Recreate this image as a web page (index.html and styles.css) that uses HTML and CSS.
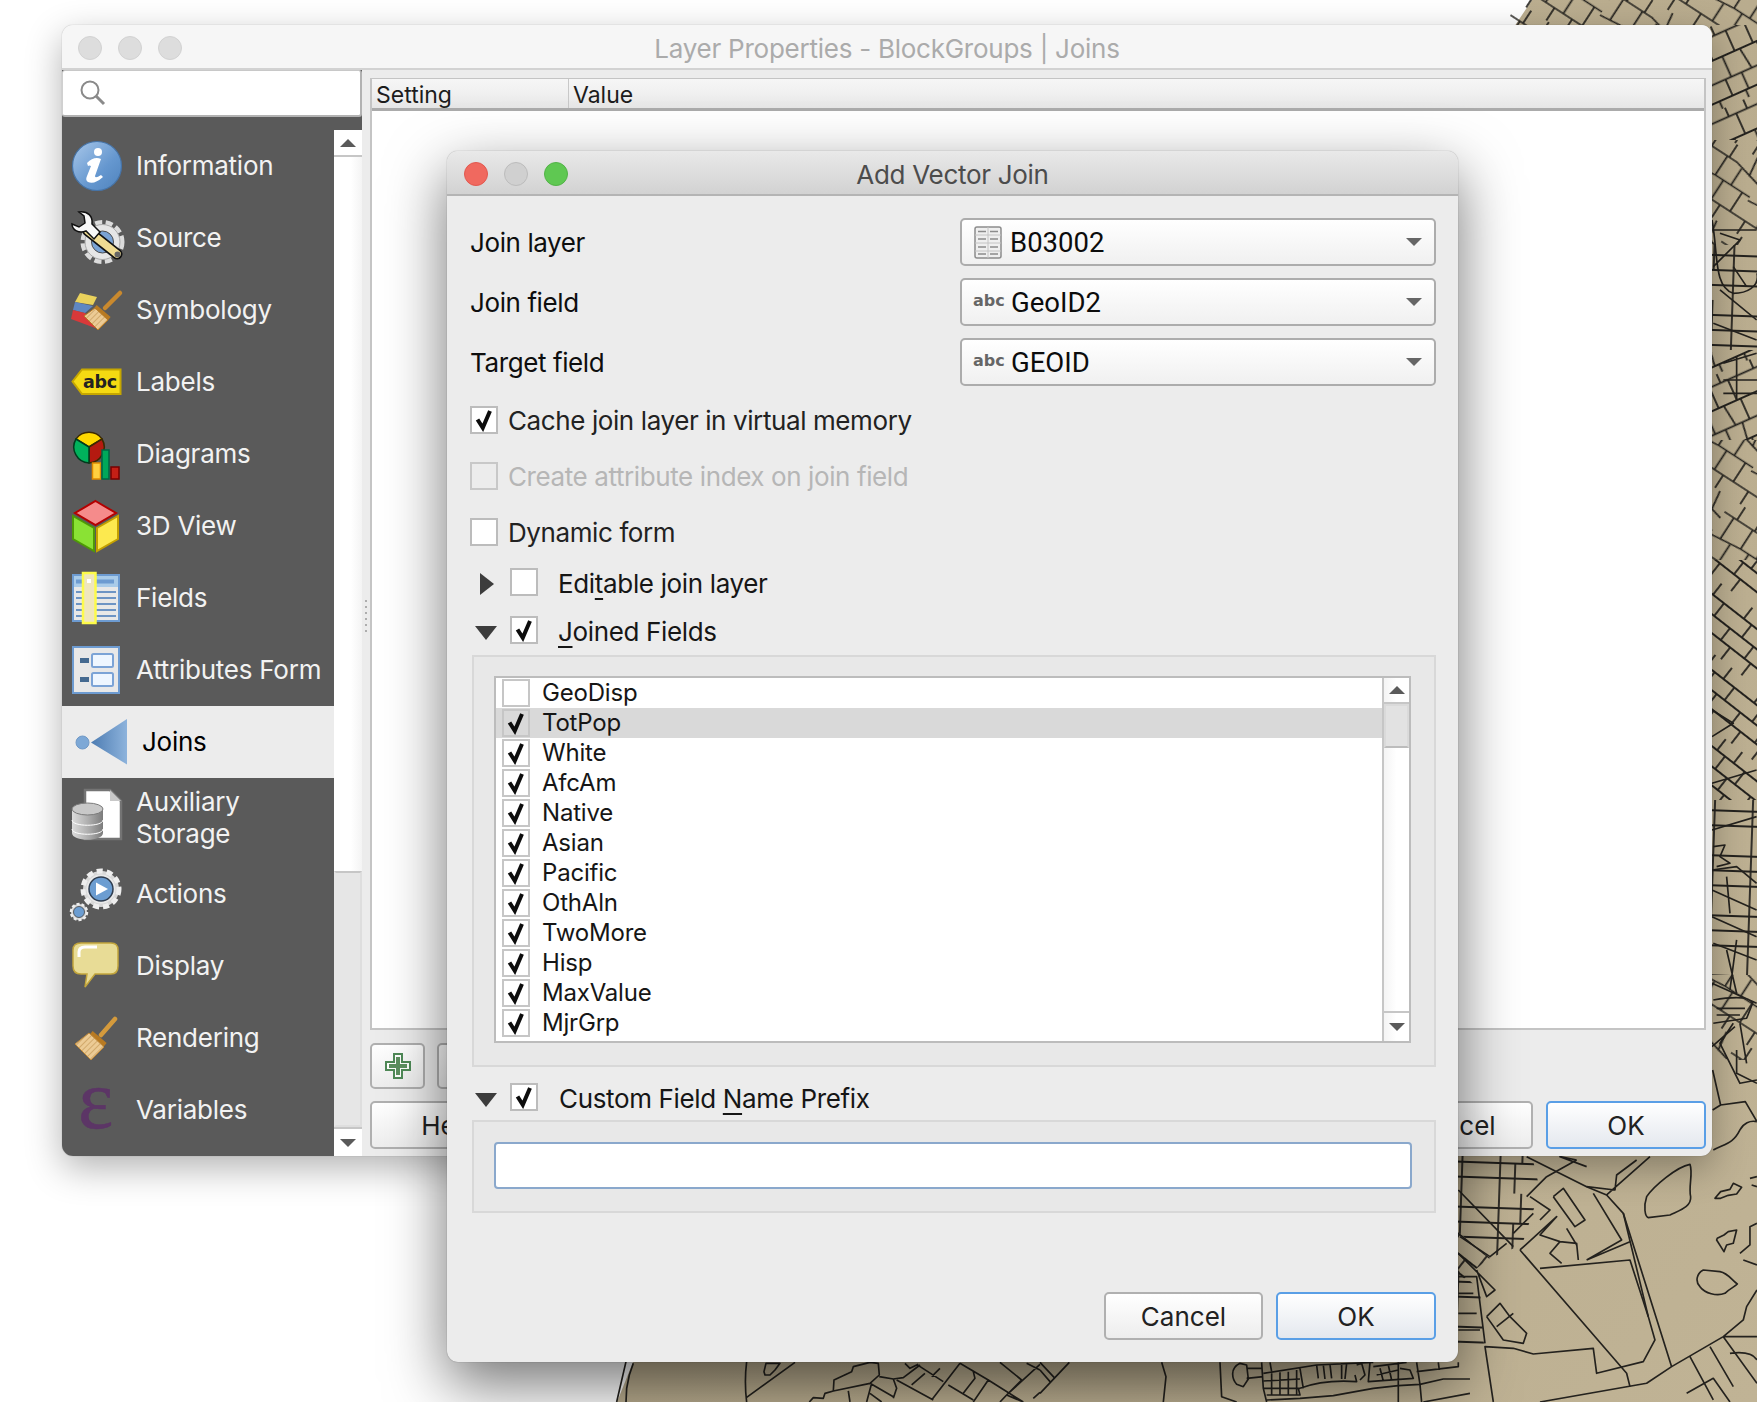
FILE: index.html
```html
<!DOCTYPE html>
<html lang="en">
<head>
<meta charset="utf-8">
<title>Add Vector Join</title>
<link rel="stylesheet" href="styles.css">
</head>
<body>
<svg class="sprite" width="0" height="0">
  <defs>
    <symbol id="chk" viewBox="2 2 24 24"><path d="M7.5 13.500 L12.800 21.800 L20 5" fill="none" stroke="#0c0c0c" stroke-width="4"/></symbol>
    <linearGradient id="gi" x1="0" y1="0" x2="1" y2="1"><stop offset="0" stop-color="#a9c8ea"/><stop offset=".6" stop-color="#6597cf"/><stop offset="1" stop-color="#4f83bd"/></linearGradient>
    <linearGradient id="gj" x1="0" y1="0" x2="1" y2="0"><stop offset="0" stop-color="#4d7cb2"/><stop offset="1" stop-color="#8db3dc"/></linearGradient>
    <linearGradient id="gd" x1="0" y1="0" x2="1" y2="0"><stop offset="0" stop-color="#dcdcdc"/><stop offset=".5" stop-color="#b0b0b0"/><stop offset="1" stop-color="#7c7c7c"/></linearGradient>
    <pattern id="brist" width="4" height="4" patternUnits="userSpaceOnUse" patternTransform="rotate(45)"><rect width="4" height="4" fill="#eccb95"/><path d="M0 0V4" stroke="#b98a46" stroke-width="1"/></pattern>
  </defs>
</svg>

<svg class="map" viewBox="0 0 1757 1402" width="1757" height="1402">
  <defs>
    <linearGradient id="mapfill" x1="0" y1="0" x2="1" y2="1"><stop offset="0" stop-color="#c2b596"/><stop offset=".5" stop-color="#b9ac8e"/><stop offset="1" stop-color="#c0b395"/></linearGradient>
    <pattern id="blkA" width="100" height="100" patternUnits="userSpaceOnUse" patternTransform="rotate(-24) scale(.8)">
      <path d="M0 12H100M0 40H100M0 68H100M0 90H100M15 0V12M40 0V12M70 0V12M25 12V40M55 12V40M80 12V40M10 40V68M38 40V68M62 40L66 68M85 40V68M30 68V90M52 68V90M75 68L72 90M12 90V100M48 90V100M78 90V100" fill="none" stroke="#24221e" stroke-width="2.2"/>
    </pattern>
    <pattern id="blkB" width="100" height="100" patternUnits="userSpaceOnUse" patternTransform="rotate(33) scale(.75)">
      <path d="M0 20H60L100 30M0 55L45 50H100M0 80H100M20 0V20M48 0V20M80 0L84 27M15 20V53M45 20V50M70 24V50M30 53V80M58 50V80M88 50V80M12 80V100M44 80V100M72 80V100" fill="none" stroke="#24221e" stroke-width="2.3"/>
    </pattern>
    <pattern id="blkC" width="80" height="60" patternUnits="userSpaceOnUse" patternTransform="rotate(2)">
      <path d="M0 15H80M0 30H80M0 45H80M20 0V60M42 0V30M62 0V60M35 30V60" fill="none" stroke="#24221e" stroke-width="1.8"/>
    </pattern>
    <pattern id="blkD" width="60" height="60" patternUnits="userSpaceOnUse" patternTransform="rotate(38)">
      <path d="M0 14H60M0 30H60M0 45H60M15 0V14M36 0V14M50 14V30M25 14V30M10 30V45M40 30V45M22 45V60M48 45V60" fill="none" stroke="#24221e" stroke-width="1.8"/>
    </pattern>
  </defs>
  <path class="land" d="M1532 0L1512 30L1450 1100L633 1362L617 1402H1757V0Z"/>
  <path class="fillB" d="M1510 0H1757V25H1510Z"/>
  <path class="fillA" d="M1710 25H1757V140H1710Z"/>
  <path class="fillB" d="M1710 140H1757V245H1710Z"/>
  <path class="fillC" d="M1710 245H1757V350H1710Z"/>
  <path class="fillA" d="M1710 350H1757V440H1710Z"/>
  <path class="fillB" d="M1710 440H1757V560H1710Z"/>
  <path class="fillD" d="M1710 560H1757V650H1710Z"/>
  <path class="fillD" d="M1710 650H1757V800H1710Z"/>
  <path class="fillC" d="M1710 800H1757V880H1710Z"/>
  <path class="fillC" d="M1710 880H1757V975H1710Z"/>
  <path class="fillB" d="M1710 975H1757V1060H1710Z"/>
  <path class="fillC" d="M1458 1156H1532L1540 1190L1522 1245L1490 1258L1458 1232Z"/>
  <path class="fillD" d="M1458 1232L1490 1258L1462 1280L1458 1280Z"/>
  <path class="fillC" d="M1458 1270L1480 1290L1484 1345H1458Z"/>
  <g class="lines">
    <g transform="translate(1300 1050) scale(.3333)">
      <path d="M1170 343C1130 350 1060 410 1040 440C1030 470 1035 500 1045 503L1110 495C1140 480 1175 470 1172 440C1165 410 1180 370 1170 343Z"/>
      <path d="M1210 660C1190 670 1185 695 1200 710C1215 730 1250 740 1275 730C1290 715 1305 710 1312 702C1295 690 1285 670 1260 665Z"/>
      <path d="M1245 445L1262 425L1290 418L1300 400L1325 412L1310 432L1285 436L1262 445Z"/>
      <path d="M1252 565L1272 555L1285 545L1310 540L1300 580L1280 585L1272 605L1250 570Z"/>
      <path d="M1320 610L1350 585L1350 530L1371 520M1330 630L1371 645M1350 385L1371 380M1355 405L1371 410"/>
      <path d="M1240 300C1280 280 1300 280 1320 240C1330 220 1350 210 1371 215M1238 60L1262 165L1336 155L1371 215M1262 165L1238 180M1310 0V70L1371 100"/>
      <path d="M680 320L860 410L920 435L970 490L1045 800L1065 870L1030 935L890 970L880 895L700 912L640 895L555 890L580 1056"/>
      <path d="M970 490L1115 950M920 435L1050 320M860 410L945 420L950 375L1010 330M830 330L780 320L860 350M740 380L680 440M740 380L830 330"/>
      <path d="M660 600L980 970L990 1010M720 655L990 630L1045 800M860 630L990 575M860 630L965 570L880 430M660 600L770 500L720 555L780 575L830 580L835 630M780 575L750 610L785 640M800 535L830 585"/>
      <path d="M760 440L790 415L855 510L825 530L760 440M690 440L750 480L720 510M640 590L475 420M700 490L640 550M620 580L570 620L480 560"/>
      <path d="M1115 950L1040 1000L720 1056M1115 950L1270 860H1371M1270 860L1371 1000M1170 920L1240 1050M1230 890L1300 1010M1290 910C1330 905 1360 910 1371 930M1160 1030L1240 985L1290 1056M1371 720L1340 770L1330 810L1270 860"/>
      <path d="M475 610L585 720L560 740L530 660M560 800L600 760L630 800L680 850L670 880L610 870L560 800M590 830L640 790M475 680H530L555 880M475 730H520M475 790H530M475 840H540"/>
    </g>
    <g transform="translate(1260 650) scale(.3333)">
      <path d="M1356 180L1420 220L1356 260M1356 400L1490 360M1356 540L1490 500M1356 660L1430 650L1490 700M1400 680L1410 790M1356 720L1490 780M1356 800L1490 860M1356 1000L1490 1060M1420 1120L1380 1180L1440 1300L1491 1290M1356 1190L1425 1130M1360 1050C1420 1040 1470 1040 1478 1060L1460 1105L1360 1120M1370 1075H1455M1370 1095H1440M1440 1120L1460 1240"/>
      <path d="M1360 590L1395 585L1380 620L1410 640L1370 650M1400 900L1430 1030M1360 880L1490 930M1430 870L1410 1020"/>
    </g>
    <g transform="translate(1480 0) scale(.3333)">
      <path d="M696 660C715 760 700 860 760 880C800 880 840 860 831 820M700 690L830 690M720 700L780 720L700 800M760 800L800 860M720 870L830 960M700 970L830 1020M730 1090L830 1060M770 1070V1200M730 1140H831M730 1180H831"/>
    </g>
    <g transform="translate(610 1355) scale(.3333)">
      <path d="M48 20L20 141M70 25L58 60L50 100L48 141M410 20C405 60 405 100 410 141M410 127L555 22M465 60L462 50L468 25L510 25L495 45L480 60Z"/>
      <path d="M780 22L805 25L808 60L780 85L670 108L672 75L725 50L730 35L780 22M808 65L850 72L880 68L930 30M850 72L860 100L850 130M780 85L850 125M785 85L770 141M715 108L720 141M670 108L645 115L640 130L610 128L598 141M780 115L815 141"/>
      <path d="M860 75L970 135M885 25L900 40L925 28M920 28L1000 80M945 55L905 90M990 40L965 65M1050 25L965 135M1050 25L1135 75L1090 141M1090 50L1095 70L1075 95L1060 115M1015 90L1090 135M1135 75L1240 141M1170 22L1235 75L1190 120L1170 141M1250 25L1290 45M1290 28L1190 120M1190 120L1240 141M1270 130L1290 112"/>
    </g>
    <g transform="translate(1040 1355) scale(.3333)">
      <path d="M0 22L45 70M88 22L0 115M0 45L30 80M365 22L378 65L370 141M540 22L545 125L590 141M600 25C570 40 575 70 590 88L610 95L625 72L620 30ZM620 40H665M620 70L670 65M665 22L670 100L680 141M690 22L695 50"/>
      <path d="M670 55L830 30L1000 22M670 78L780 72M670 100H780M680 120H780L775 100M695 55V120M720 52V120M745 50V120M770 45V120M680 135L780 130L880 122L1000 100L1075 92L1140 88L1210 72L1290 72M780 40L790 100M780 100C820 85 880 75 950 80L945 60M830 30L835 70M850 30L855 72M870 28L875 70M905 24V72M920 25L915 72"/>
      <path d="M950 30L965 25L975 60L960 75M990 22L985 80L1120 70L1110 45L1080 40M1000 35L1100 22M1010 60L1075 45M1020 40L1030 78M1045 30L1055 75M1075 22V141M1130 22L1140 88L1145 141M1130 50L1255 35V22M1195 22L1198 45M1150 141L1290 115"/>
    </g>
  </g>
</svg>

<section class="win main">
  <header class="tbar tbar-main">
    <div class="lights"><i class="lt off"></i><i class="lt off"></i><i class="lt off"></i></div>
    <div class="tt tt-main">Layer Properties - BlockGroups | Joins</div>
  </header>
  <div class="main-body">
    <aside class="side">
      <div class="search">
        <svg width="30" height="30" viewBox="0 0 30 30"><circle cx="12" cy="12" r="8.5" fill="none" stroke="#8a8a8a" stroke-width="2"/><path d="M18 18L26 26" stroke="#8a8a8a" stroke-width="3"/></svg>
      </div>
      <div class="side-main">
        <nav class="nav">
          <a class="it"><svg class="ic" viewBox="0 0 54 54"><circle cx="27" cy="27" r="24.5" fill="url(#gi)" stroke="#4674a8" stroke-width="1.2"/><circle cx="28" cy="13" r="4" fill="#fff"/><path d="M17 24Q24 17 31 20L25 37Q25 40 31 36L33 38Q24 46 18 43Q15 41 17 37L21 27Q19 26 18 27Z" fill="#fff"/></svg><span>Information</span></a>
          <a class="it"><svg class="ic" viewBox="0 0 54 54"><circle cx="32.500" cy="31" r="19.500" fill="none" stroke="#dcdcdc" stroke-width="5" stroke-dasharray="7 3.500"/><circle cx="32.500" cy="31" r="17.500" fill="#e6e6e6" stroke="#aaa"/><circle cx="32.500" cy="31" r="11" fill="#7aa3d4" stroke="#4c4c4c"/><path d="M18 20L47 43" stroke="#111" stroke-width="11" stroke-linecap="round"/><path d="M18 20L47 43" stroke="#f0dc92" stroke-width="7.500" stroke-linecap="round"/><circle cx="47.500" cy="43.500" r="3" fill="#666"/><path d="M2 13L9 16L15 12L14 5L9 1C18 0 23 5 22 13L30 21L24 28L16 20C9 23 2 19 2 13Z" fill="#f8f8f8" stroke="#111" stroke-width="1.500"/></svg><span>Source</span></a>
          <a class="it"><svg class="ic" viewBox="0 0 54 54"><path d="M10 10L27 14L23 22L5 19Z" fill="#ead25c"/><path d="M5 19L23 23L15 30L3 27Z" fill="#5f87c2"/><path d="M3 27L15 30L28 46L1 36Z" fill="#d8393a"/><path d="M50 10L35 25" stroke="#c9892e" stroke-width="4.500" stroke-linecap="round"/><path d="M25 24L39 36" stroke="#b87a22" stroke-width="5"/><path d="M25 25L38 37L28 47L14 33Z" fill="url(#brist)" stroke="#b87a22"/></svg><span>Symbology</span></a>
          <a class="it"><svg class="ic" viewBox="0 0 54 54"><path d="M2.500 26.500L12 14.500H50.500V39H12Z" fill="#f5da12" stroke="#c6a700" stroke-width="2"/><text class="abc-ic" x="13" y="33">abc</text></svg><span>Labels</span></a>
          <a class="it"><svg class="ic" viewBox="0 0 54 54"><path d="M19 20L6 12A16 16 0 0 1 32 12Z" fill="#ffd900" stroke="#3c2a00" stroke-width="1.500"/><path d="M19 20L32 12A16 16 0 0 1 19 36Z" fill="#b41a10" stroke="#3c2a00" stroke-width="1.500"/><path d="M19 20L19 36A16 16 0 0 1 6 12Z" fill="#00b25c" stroke="#003c1e" stroke-width="1.500"/><rect x="22.500" y="36" width="8" height="16" fill="#ffd040" stroke="#e08a00" stroke-width="1.500"/><rect x="32" y="23" width="7" height="29" fill="#00a85a" stroke="#064" stroke-width="1.500"/><rect x="41" y="40" width="8" height="12" fill="#c51f16" stroke="#700" stroke-width="1.500"/></svg><span>Diagrams</span></a>
          <a class="it"><svg class="ic" viewBox="0 0 54 54"><path d="M25.500 2L46 14L25.500 26L5 14Z" fill="#f58b8b" stroke="#b40000" stroke-width="2"/><path d="M3 17L24 29V52L3 40Z" fill="#8ae234" stroke="#4e9a06" stroke-width="2"/><path d="M27 29L48 17V40L27 52Z" fill="#fce94f" stroke="#c4a000" stroke-width="2"/></svg><span>3D View</span></a>
          <a class="it"><svg class="ic" viewBox="0 0 54 54"><rect x="3" y="4" width="46" height="46" fill="#e8e8e8" stroke="#6d9bd1" stroke-width="2"/><rect x="4" y="5" width="44" height="11" fill="#a9cbe9"/><path d="M6 10.500H44" stroke="#6d9bd1" stroke-width="4"/><path d="M6 21H46M6 27H46M6 33H46M6 39H46M6 45H46" stroke="#6d94c4" stroke-width="2"/><rect x="13" y="2" width="12.500" height="50" fill="#efe6bd" stroke="#fdfb4a" stroke-width="2.500"/><rect x="17" y="8" width="4" height="4" fill="#fff"/></svg><span>Fields</span></a>
          <a class="it"><svg class="ic" viewBox="0 0 54 54"><rect x="3" y="4" width="46" height="46" fill="#e8e8e8" stroke="#6d9bd1" stroke-width="2"/><rect x="22" y="11" width="21" height="13" rx="1.500" fill="#eef6ff" stroke="#7ba3d6" stroke-width="2"/><rect x="22" y="30" width="21" height="13" rx="1.500" fill="#eef6ff" stroke="#7ba3d6" stroke-width="2"/><rect x="10" y="15" width="9" height="5" fill="#456a90"/><rect x="10" y="34" width="9" height="5" fill="#456a90"/></svg><span>Attributes Form</span></a>
          <a class="it on"><svg class="ic ic-w" viewBox="0 0 60 54"><circle cx="12.500" cy="27.500" r="6.500" fill="#7da8d6" stroke="#6f98c6"/><path d="M21 27.500L57 4V49.500Z" fill="url(#gj)"/></svg><span>Joins</span></a>
          <a class="it it-aux"><svg class="ic" viewBox="0 0 54 54"><path d="M15 3H40L51 14V52H15Z" fill="#fff" stroke="#747474" stroke-width="2.500"/><path d="M40 3V14H51Z" fill="#c8c8c8"/><path d="M2 22V46C2 55 33 55 33 46V22Z" fill="url(#gd)"/><ellipse cx="17.500" cy="22" rx="15.500" ry="6" fill="#c8c8c8" stroke="#7a7a7a"/><path d="M2 33C2 40 33 40 33 33M2 42C2 49 33 49 33 42" fill="none" stroke="#fff" stroke-width="1"/></svg><span>Auxiliary<br>Storage</span></a>
          <a class="it"><svg class="ic" viewBox="0 0 54 54"><circle cx="31" cy="22" r="18" fill="#d8d8d8" stroke="#eee" stroke-width="5" stroke-dasharray="6 4"/><circle cx="31" cy="22" r="14.500" fill="#e9e9e9"/><circle cx="31" cy="22" r="12" fill="#6c9dd1" stroke="#2f3d4f" stroke-width="1.500"/><path d="M26 15.500L38 22L26 28.500Z" fill="#fff"/><circle cx="9" cy="45" r="8" fill="#d8d8d8" stroke="#eee" stroke-width="2.500" stroke-dasharray="3 2"/><circle cx="9" cy="45" r="5.500" fill="#6c9dd1" stroke="#444" stroke-width=".8"/></svg><span>Actions</span></a>
          <a class="it"><svg class="ic" viewBox="0 0 54 54"><path d="M11 4H41Q48 4 48 11V27Q48 35 41 35H25L15 48L17 35H11Q3 35 3 27V11Q3 4 11 4Z" fill="#e8dc96" stroke="#c2a53c" stroke-width="1.500"/><path d="M9 18V13Q9 8 15 8H27" fill="none" stroke="#fff" stroke-width="3"/></svg><span>Display</span></a>
          <a class="it"><svg class="ic" viewBox="0 0 54 54"><path d="M45 8L31 24" stroke="#d49a3c" stroke-width="4.500" stroke-linecap="round"/><path d="M21 22L35 34" stroke="#b87a22" stroke-width="5"/><path d="M19 22L34 36L21 49L5 33Z" fill="url(#brist)" stroke="#c08a3c"/></svg><span>Rendering</span></a>
          <a class="it"><svg class="ic" viewBox="0 0 54 54"><text class="eps" x="8" y="45">ε</text></svg><span>Variables</span></a>
        </nav>
        <div class="sb sb-side">
          <div class="sb-btn"><i class="arr up"></i></div>
          <div class="sb-thumb"></div>
          <div class="sb-track"></div>
          <div class="sb-btn dn"><i class="arr down"></i></div>
        </div>
      </div>
    </aside>
    <div class="split"><i></i></div>
    <div class="pane">
      <div class="table">
        <div class="thead"><div class="th th1">Setting</div><div class="th">Value</div></div>
        <div class="tbody"></div>
      </div>
      <div class="tools">
        <button class="btn tool"><svg width="28" height="28" viewBox="0 0 28 28"><path d="M9 1H19V9H27V19H19V27H9V19H1V9H9Z" fill="#4f8a57"/><path d="M11 3H17V11H25V17H17V25H11V17H3V11H11Z" fill="#fff"/><path d="M12 5H16V12H23V16H16V23H12V16H5V12H12Z" fill="#5d9060"/></svg></button>
        <button class="btn tool"></button>
      </div>
      <div class="foot">
        <button class="btn help">Help</button>
        <span class="grow"></span>
        <button class="btn cancel">Cancel</button>
        <button class="btn ok wide">OK</button>
      </div>
    </div>
  </div>
</section>

<section class="win dlg">
  <header class="tbar tbar-dlg">
    <div class="lights"><i class="lt red"></i><i class="lt gray"></i><i class="lt green"></i></div>
    <div class="tt">Add Vector Join</div>
  </header>
  <div class="dlg-body">
    <div class="form">
      <label class="lab">Join layer</label>
      <div class="combo"><svg class="tbl" width="28" height="33" viewBox="0 0 28 33"><rect x="1" y="1" width="26" height="31" rx="2" fill="#efefef" stroke="#8c8c8c" stroke-width="1.500"/><path d="M1 9H27M1 17H27M1 25H27M14 1V32" stroke="#c4c4c4"/><path d="M4 5.500H12M16 5.500H24M4 13H12M16 13H24M4 21H12M16 21H24M4 28H12M16 28H24" stroke="#8c8c8c" stroke-width="1.300"/></svg><span class="cv">B03002</span><i class="arr cdn"></i></div>
      <label class="lab">Join field</label>
      <div class="combo"><b class="abc">abc</b><span class="cv">GeoID2</span><i class="arr cdn"></i></div>
      <label class="lab">Target field</label>
      <div class="combo"><b class="abc">abc</b><span class="cv">GEOID</span><i class="arr cdn"></i></div>
    </div>
    <div class="checks">
      <div class="chk"><span class="cb"><svg width="24" height="24"><use href="#chk"/></svg></span>Cache join layer in virtual memory</div>
      <div class="chk dis"><span class="cb"></span>Create attribute index on join field</div>
      <div class="chk"><span class="cb"></span>Dynamic form</div>
    </div>
    <div class="gh gh-edit"><span class="tw"><i class="tri right"></i></span><span class="cb"></span><span class="gt">Edi<u>t</u>able join layer</span></div>
    <div class="gh gh-join"><span class="tw"><i class="tri open"></i></span><span class="cb"><svg width="24" height="24"><use href="#chk"/></svg></span><span class="gt"><u>J</u>oined Fields</span></div>
    <div class="group g-list">
      <div class="list">
        <div class="rows">
          <div class="row"><span class="cb cb-r"></span><span>GeoDisp</span></div>
          <div class="row sel"><span class="cb cb-r"><svg width="24" height="24"><use href="#chk"/></svg></span><span>TotPop</span></div>
          <div class="row"><span class="cb cb-r"><svg width="24" height="24"><use href="#chk"/></svg></span><span>White</span></div>
          <div class="row"><span class="cb cb-r"><svg width="24" height="24"><use href="#chk"/></svg></span><span>AfcAm</span></div>
          <div class="row"><span class="cb cb-r"><svg width="24" height="24"><use href="#chk"/></svg></span><span>Native</span></div>
          <div class="row"><span class="cb cb-r"><svg width="24" height="24"><use href="#chk"/></svg></span><span>Asian</span></div>
          <div class="row"><span class="cb cb-r"><svg width="24" height="24"><use href="#chk"/></svg></span><span>Pacific</span></div>
          <div class="row"><span class="cb cb-r"><svg width="24" height="24"><use href="#chk"/></svg></span><span>OthAln</span></div>
          <div class="row"><span class="cb cb-r"><svg width="24" height="24"><use href="#chk"/></svg></span><span>TwoMore</span></div>
          <div class="row"><span class="cb cb-r"><svg width="24" height="24"><use href="#chk"/></svg></span><span>Hisp</span></div>
          <div class="row"><span class="cb cb-r"><svg width="24" height="24"><use href="#chk"/></svg></span><span>MaxValue</span></div>
          <div class="row"><span class="cb cb-r"><svg width="24" height="24"><use href="#chk"/></svg></span><span>MjrGrp</span></div>
        </div>
        <div class="sb sb-list">
          <div class="sb-btn"><i class="arr up"></i></div>
          <div class="sb-lthumb"></div>
          <div class="sb-ltrack"></div>
          <div class="sb-btn dn"><i class="arr down"></i></div>
        </div>
      </div>
    </div>
    <div class="gh gh-cust"><span class="tw"><i class="tri open"></i></span><span class="cb"><svg width="24" height="24"><use href="#chk"/></svg></span><span class="gt gt-c">Custom Field <u>N</u>ame Prefix</span></div>
    <div class="group g-input"><div class="input"></div></div>
    <div class="actions">
      <button class="btn dbtn">Cancel</button>
      <button class="btn dbtn ok">OK</button>
    </div>
  </div>
</section>
</body>
</html>
```
FILE: styles.css
```css
* { box-sizing: border-box; }
html, body { margin: 0; padding: 0; }
body {
  position: relative;
  width: 1757px;
  height: 1402px;
  overflow: hidden;
  background: #fff;
  font-family: "Inter", "Liberation Sans", sans-serif;
  font-size: 26px;
  color: #111;
}
.sprite { position: absolute; }
.map { position: absolute; left: 0; top: 0; display: block; }
.land { fill: url(#mapfill); }
.fillA { fill: url(#blkA); }
.fillB { fill: url(#blkB); }
.fillC { fill: url(#blkC); }
.fillD { fill: url(#blkD); }
.lines path { fill: none; stroke: #24221e; stroke-width: 5; stroke-linejoin: round; }

.win { position: absolute; display: flex; flex-direction: column; background: #ececec; }
.main {
  left: 62px; top: 25px; width: 1650px; height: 1131px;
  border-radius: 11px;
  box-shadow: 0 12px 36px rgba(0,0,0,.3), 0 0 1px rgba(0,0,0,.4);
}
.dlg {
  left: 447px; top: 151px; width: 1011px; height: 1211px;
  border-radius: 11px;
  box-shadow: 0 22px 60px rgba(0,0,0,.55), 0 0 1px rgba(0,0,0,.5);
}

.tbar { position: relative; height: 45px; flex: none; display: flex; align-items: center; justify-content: center; border-radius: 11px 11px 0 0; }
.tbar-main { background: #f6f6f6; border-bottom: 2px solid #d2d2d2; }
.tbar-dlg { background: linear-gradient(#e9e9e9, #d2d2d2); border-bottom: 2px solid #b4b4b4; }
.lights { position: absolute; left: 16px; top: 11px; display: flex; gap: 16px; }
.lights .lt { width: 24px; height: 24px; border-radius: 50%; }
.lt.off { background: #dddddd; border: 1px solid #d2d2d2; }
.lt.red { background: #f0695f; border: 1px solid #e2584f; }
.lt.gray { background: #d0d0d0; border: 1px solid #bcbcbc; }
.lt.green { background: #5fc852; border: 1px solid #52b347; }
.dlg .lights { left: 17px; }
.tt { font-size: 26px; color: #4c4c4c; padding-top: 4px; letter-spacing: -.3px; }
.tt-main { color: #ababab; letter-spacing: -.25px; }

.main-body { flex: 1; display: flex; min-height: 0; }
.side { width: 300px; flex: none; display: flex; flex-direction: column; background: #5a5a5a; border-radius: 0 0 0 11px; overflow: hidden; }
.search { height: 47px; flex: none; background: #fff; border: 2px solid #b2b2b2; border-top: 1px solid #c8c8c8; border-left: 1px solid #d0d0d0; border-radius: 3px; display: flex; align-items: center; padding-left: 15px; }
.side-main { flex: 1; display: flex; min-height: 0; padding-top: 13px; }
.nav { width: 272px; flex: none; display: flex; flex-direction: column; }
.it { height: 72px; flex: none; display: flex; align-items: center; gap: 12px; padding-left: 8px; color: #f2f2f2; line-height: 32px; letter-spacing: -.25px; }
.it.on { background: #ececec; color: #000; }
.it-aux { height: 80px; }
.it-aux .ic { margin-bottom: 8px; }
.ic { width: 54px; height: 54px; flex: none; display: block; overflow: visible; }
.ic-w { width: 60px; }
.abc-ic { font-family: "DejaVu Sans", sans-serif; font-weight: 700; font-size: 17.5px; fill: #222; }
.eps { font-family: "Liberation Serif", serif; font-size: 84px; fill: #5c3566; stroke: #5c3566; stroke-width: .5px; }

.sb { width: 28px; flex: none; display: flex; flex-direction: column; background: #fff; }
.sb-btn { height: 27px; flex: none; display: flex; align-items: center; justify-content: center; border-bottom: 2px solid #c6c6c6; background: #fff; }
.sb-btn.dn { height: 29px; border-bottom: 0; border-top: 2px solid #c6c6c6; }
.sb-thumb { height: 714px; flex: none; background: linear-gradient(90deg, #fff 60%, #f4f4f4); }
.sb-track { flex: 1; background: #e6e6e6; border: 2px solid #dedede; border-top: 2px solid #c6c6c6; border-left-color: #e6e6e6; }
.arr { display: block; width: 0; height: 0; border-style: solid; border-color: transparent; }
.arr.up { border-width: 0 8px 8px; border-bottom-color: #5a5a5a; }
.arr.down { border-width: 8px 8px 0; border-top-color: #5a5a5a; }

.split { width: 8px; flex: none; position: relative; background: #ececec; }
.split i { position: absolute; left: 3px; top: 530px; width: 2px; height: 34px; background: repeating-linear-gradient(#adadad 0 2px, transparent 2px 6px); }
.pane { flex: 1; display: flex; flex-direction: column; padding: 8px 6px 6px 0; min-width: 0; }
.table { height: 952px; flex: none; display: flex; flex-direction: column; border: 2px solid #c4c4c4; border-top-width: 1px; background: #fff; }
.thead { height: 32px; flex: none; display: flex; background: linear-gradient(#f6f6f6, #f0f0f0 50%, #e6e6e6); border-bottom: 3px solid #ababab; }
.th { flex: 1; padding-left: 4px; font-size: 23px; line-height: 32px; color: #1c1c1c; }
.th1 { flex: 0 0 197px; border-right: 1px solid #c8c8c8; }
.tbody { flex: 1; background: #fff; }
.tools { display: flex; gap: 12px; margin-top: 13px; }
.foot { display: flex; margin-top: 12px; gap: 13px; }
.grow { flex: 1; }
.btn {
  font: inherit; color: #222; padding: 0;
  background: linear-gradient(#fff, #ededed);
  border: 2px solid #b0b0b0; border-radius: 5px;
}
.tool { width: 55px; height: 46px; display: flex; align-items: center; justify-content: center; }
.help { width: 159px; height: 48px; }
.cancel { width: 160px; height: 48px; }
.wide { width: 160px; height: 48px; }
.btn.ok { border-color: #5a9fe6; background: linear-gradient(#fff, #e4e8ee); }

.dlg-body { flex: 1; display: flex; flex-direction: column; padding: 22px 23px 22px 23px; min-height: 0; }
.form { display: grid; grid-template-columns: 1fr 476px; row-gap: 12px; align-items: center; margin-right: -1px; }
.lab { color: #0e0e0e; letter-spacing: -.4px; }
.combo {
  height: 48px; display: flex; align-items: center; padding-left: 11px; padding-right: 12px;
  background: linear-gradient(#fff, #f0f0f0);
  border: 2px solid #acacac; border-radius: 5px;
}
.tbl { margin-left: 1px; flex: none; }
.abc { width: 30px; font-family: "DejaVu Sans", sans-serif; font-weight: 700; font-size: 16px; color: #666; line-height: 1; position: relative; top: -1px; }
.cv { margin-left: 8px; flex: 1; font-family: "Roboto", "Liberation Sans", sans-serif; font-size: 27.5px; color: #0c0c0c; }
.arr.cdn { border-width: 8px 8px 0; border-top-color: #666; }

.checks { display: flex; flex-direction: column; gap: 28px; margin-top: 20px; }
.chk { height: 28px; display: flex; align-items: center; gap: 10px; color: #222; letter-spacing: -.4px; }
.chk.dis { color: #b6b6b6; }
.cb { width: 28px; height: 28px; flex: none; display: flex; align-items: center; justify-content: center; background: #fff; border: 2px solid #bcbcbc; }
.dis .cb { background: #ececec; border-color: #c8c8c8; }
.gh { height: 28px; display: flex; align-items: center; }
.gh-edit { margin-top: 22px; }
.gh-join { margin-top: 20px; }
.gh-cust { margin-top: 16px; }
.tw { width: 40px; height: 28px; flex: none; display: flex; align-items: center; padding-left: 5px; }
.tri { display: block; width: 0; height: 0; border-style: solid; border-color: transparent; }
.tri.right { margin-left: 5px; margin-top: 4px; border-width: 11px 0 11px 14px; border-left-color: #3c3c3c; }
.tri.open { margin-top: 5px; border-width: 14px 11px 0; border-top-color: #3c3c3c; }
.gt { margin-left: 20px; padding-top: 2px; color: #161616; letter-spacing: -.35px; }
.gt-c { margin-left: 21px; }
u { text-decoration-thickness: 1.5px; text-underline-offset: 5px; }

.group { margin-left: 2px; margin-right: -1px; background: #e8e8e8; border: 2px solid #d8d8d8; }
.g-list { margin-top: 11px; padding: 19px 23px 22px 20px; }
.list { height: 367px; display: flex; background: #fff; border: 2px solid #bcbcbc; }
.rows { flex: 1; display: flex; flex-direction: column; font-size: 24px; letter-spacing: -.2px; }
.row { height: 30px; flex: none; display: flex; align-items: center; gap: 12px; padding-left: 6px; color: #161616; }
.row span:last-child:not(.cb) { position: relative; top: -1px; }
.row.sel { background: #d9d9d9; }
.cb-r { border-color: #c6c6c6; background: transparent; }
.sb-list { width: 27px; border-left: 2px solid #c6c6c6; background: linear-gradient(90deg, #f4f4f4, #fff 50%); }
.sb-lthumb { height: 44px; flex: none; background: #e2e2e2; border: 2px solid #dadada; border-bottom: 2px solid #bcbcbc; }
.sb-ltrack { flex: 1; }
.sb-list .sb-btn { background: transparent; height: 26px; }
.sb-list .sb-btn.dn { height: 30px; }
.g-input { margin-top: 9px; padding: 20px 22px 22px 20px; }
.input { height: 47px; background: #fff; border: 2px solid #8aa8cc; border-radius: 4px; }
.actions { margin-top: auto; margin-right: -1px; display: flex; justify-content: flex-end; gap: 13px; }
.dbtn { width: 159px; height: 48px; }
.dbtn.ok { width: 160px; }
```
